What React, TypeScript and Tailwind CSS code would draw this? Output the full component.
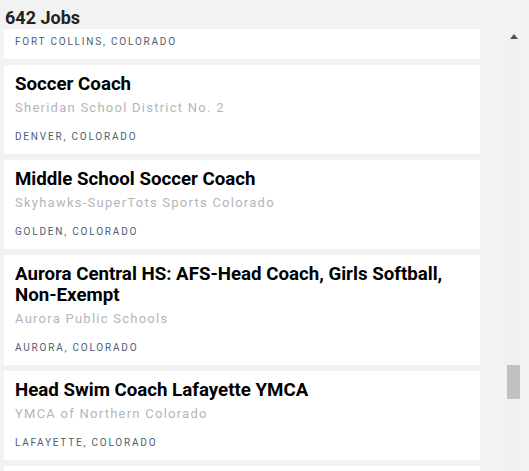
import React from "react";

type Job = {
  title: string;
  company: string;
  location: string;
};

const jobs: Job[] = [
  { title: "Assistant Swim Coach", company: "City of Fort Collins", location: "Fort Collins, Colorado" },
  { title: "Soccer Coach", company: "Sheridan School District No. 2", location: "Denver, Colorado" },
  { title: "Middle School Soccer Coach", company: "Skyhawks-SuperTots Sports Colorado", location: "Golden, Colorado" },
  {
    title: "Aurora Central HS: AFS-Head Coach, Girls Softball, Non-Exempt",
    company: "Aurora Public Schools",
    location: "Aurora, Colorado",
  },
  { title: "Head Swim Coach Lafayette YMCA", company: "YMCA of Northern Colorado", location: "Lafayette, Colorado" },
  { title: "Youth Basketball Coach", company: "City of Boulder", location: "Boulder, Colorado" },
];

function JobCard({ job }: { job: Job }) {
  return (
    <div className="bg-white pt-[9px] pb-[10px] pl-[11px] pr-4">
      <h2 className="text-[18.7px] leading-[21px] font-bold text-black">{job.title}</h2>
      <p className="mt-[3px] text-[13px] leading-[20px] tracking-[1.25px] text-[#b3b6bb]">{job.company}</p>
      <p className="mt-[12px] text-[10px] leading-[14px] tracking-[1.8px] uppercase text-[#4d5d72]">
        {job.location}
      </p>
    </div>
  );
}

function Scrollbar() {
  return (
    <div className="w-[17px] shrink-0 bg-[#f1f1f1] flex flex-col items-center">
      <div className="h-[17px] w-full flex items-center justify-center">
        <svg width="8" height="5" viewBox="0 0 8 5" className="mt-[-2px]">
          <path d="M4 0 L8 5 L0 5 Z" fill="#505050" />
        </svg>
      </div>
      <div className="mt-[319px] w-[13px] h-[34px] bg-[#c1c1c1]" />
    </div>
  );
}

export default function App() {
  return (
    <div
      className="w-[529px] h-[471px] bg-[#f2f2f2] flex flex-col overflow-hidden"
      style={{ fontFamily: "Roboto, 'Noto Sans', sans-serif" }}
    >
      <h1 className="pl-[5px] pt-[7px] text-[18px] leading-[22px] font-bold text-[#222222]">642 Jobs</h1>
      <div className="flex flex-1 min-h-0">
        <div className="flex-1 overflow-hidden pl-[4px] pr-[25px]">
          <div className="-mt-[59px] flex flex-col gap-[6px]">
            {jobs.map((job) => (
              <JobCard key={job.title} job={job} />
            ))}
          </div>
        </div>
        <Scrollbar />
        <div className="w-[7px] shrink-0" />
      </div>
    </div>
  );
}
